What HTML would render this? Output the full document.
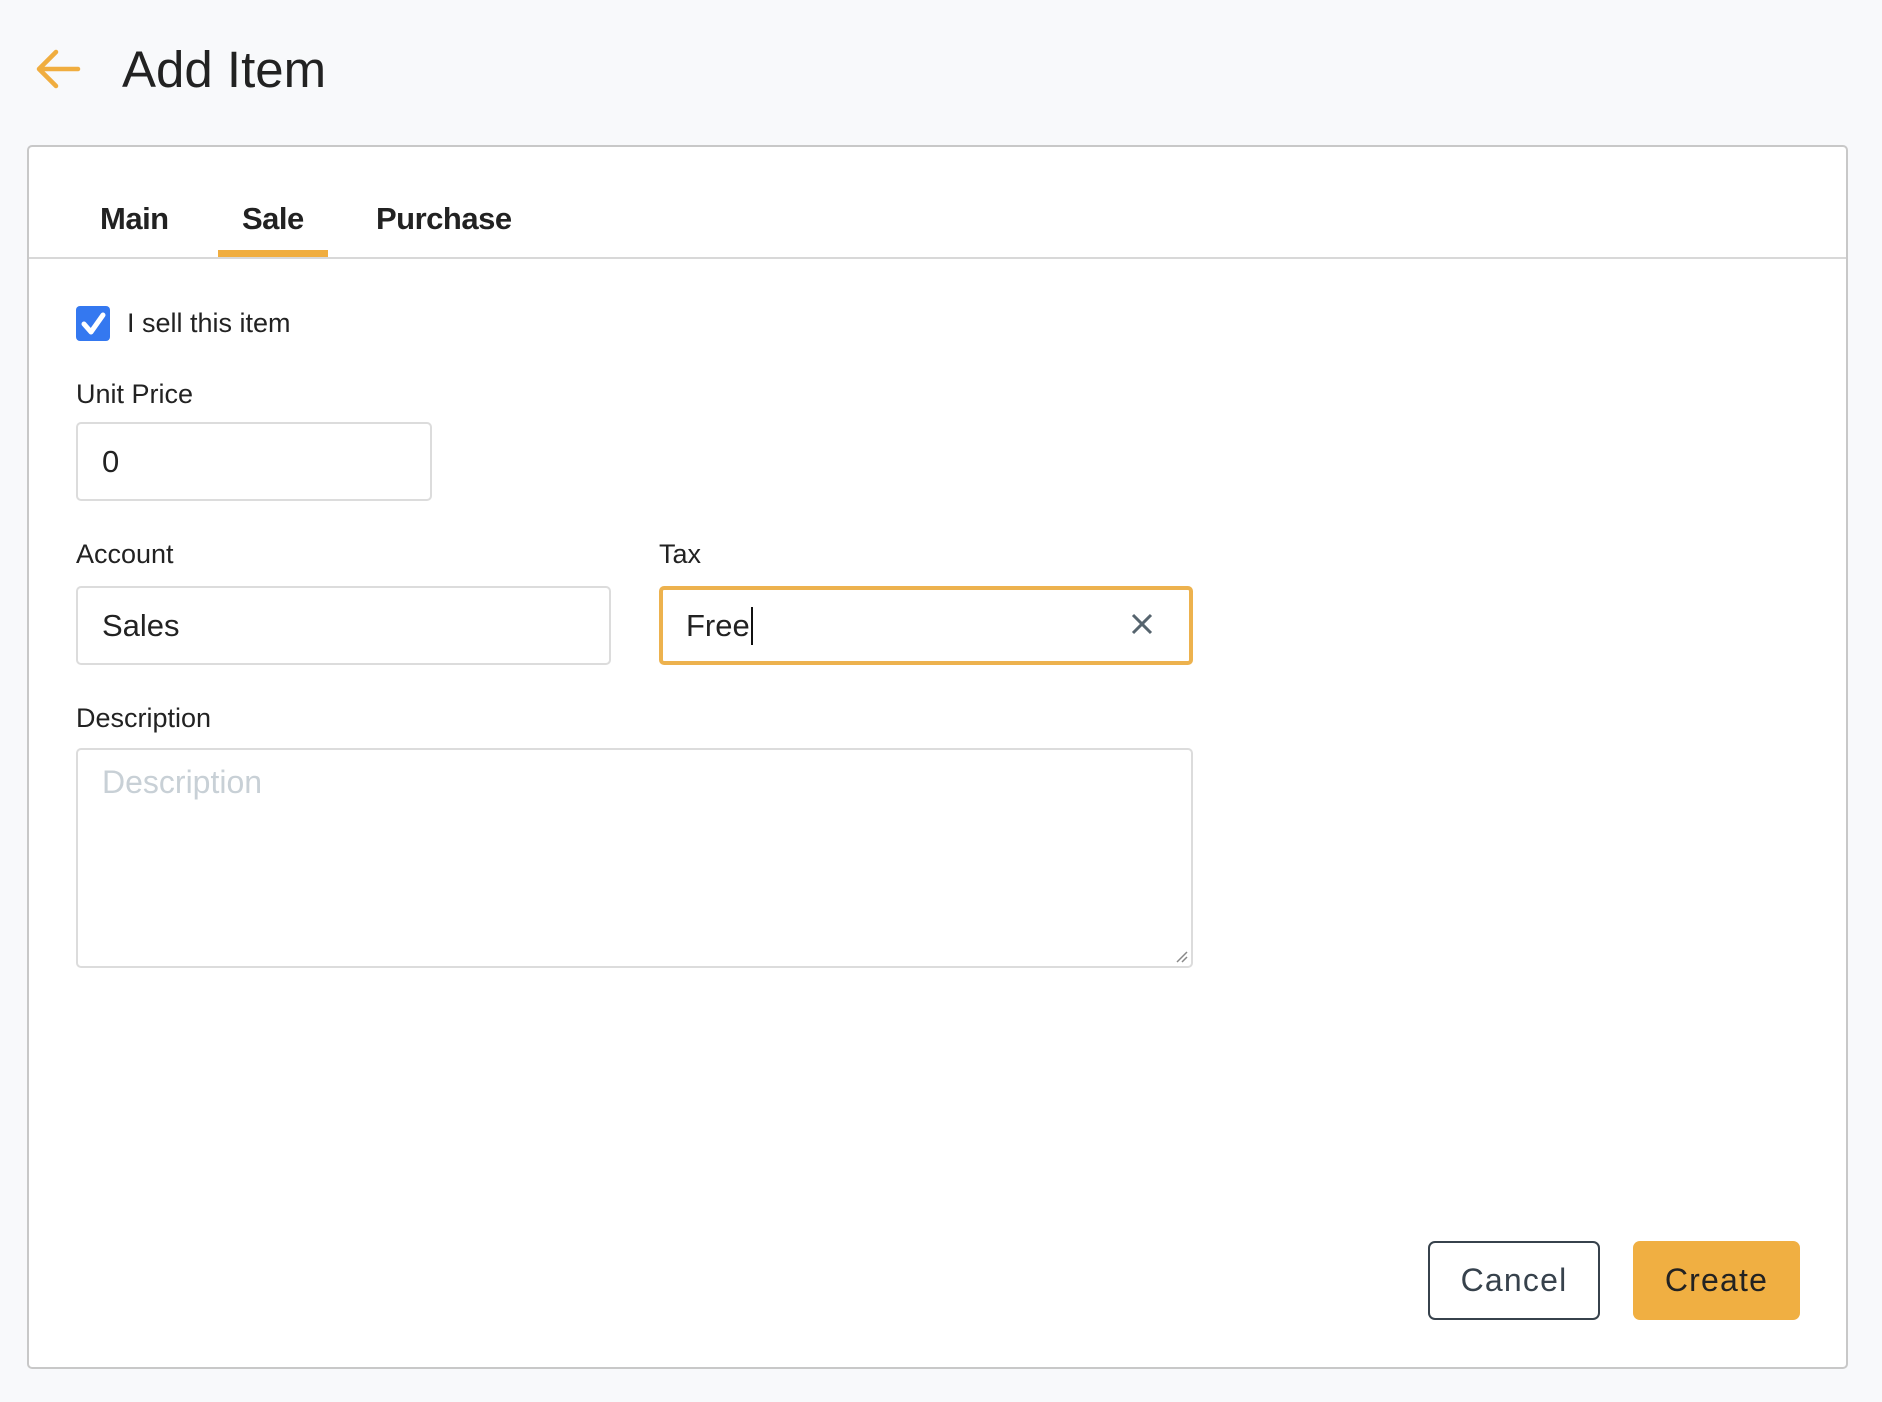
<!DOCTYPE html>
<html><head><style>
*{box-sizing:border-box;margin:0;padding:0}
body{width:1882px;height:1402px;background:#f8f9fb;font-family:"Liberation Sans",sans-serif;color:#222;position:relative;overflow:hidden}
.a{position:absolute}
.card{left:27px;top:145px;width:1821px;height:1224px;background:#fff;border:2px solid #c8c8c8;border-radius:5px}
.tab{font-weight:bold;font-size:31px;top:201px;color:#222;letter-spacing:-0.5px}
.lbl{font-size:27px;color:#222}
.inp{border:2px solid #dcdcdc;border-radius:5px;background:#fff;font-size:31px;padding-left:24px;display:flex;align-items:center}
.btn{top:1241px;height:79px;border-radius:7px;font-size:32px;letter-spacing:1.2px;display:flex;align-items:center;justify-content:center}
</style></head><body>
<svg class="a" style="left:34px;top:46px" width="48" height="48" viewBox="0 0 48 48"><path d="M44 23H6M22 6L5 23l17 17" fill="none" stroke="#f0ad3f" stroke-width="4.5" stroke-linecap="round" stroke-linejoin="round"/></svg>
<div class="a" style="left:122px;top:40px;font-size:51px;color:#222">Add Item</div>
<div class="a card"></div>
<div class="a tab" style="left:100px">Main</div>
<div class="a tab" style="left:242px">Sale</div>
<div class="a tab" style="left:376px">Purchase</div>
<div class="a" style="left:29px;top:257px;width:1817px;height:2px;background:#d8d8d8"></div>
<div class="a" style="left:218px;top:250px;width:110px;height:7px;background:#f0ad3f"></div>
<div class="a" style="left:76px;top:306px;width:34px;height:35px;background:#3478f0;border-radius:4px"></div>
<svg class="a" style="left:76px;top:306px" width="34" height="35" viewBox="0 0 34 35"><path d="M8 18l7 8 12-17" fill="none" stroke="#fff" stroke-width="5" stroke-linecap="round" stroke-linejoin="round"/></svg>
<div class="a lbl" style="left:127px;top:308px">I sell this item</div>
<div class="a lbl" style="left:76px;top:379px">Unit Price</div>
<div class="a inp" style="left:76px;top:422px;width:356px;height:79px">0</div>
<div class="a lbl" style="left:76px;top:539px">Account</div>
<div class="a inp" style="left:76px;top:586px;width:535px;height:79px">Sales</div>
<div class="a lbl" style="left:659px;top:539px">Tax</div>
<div class="a inp" style="left:659px;top:586px;width:534px;height:79px;border:4px solid #edb24e;padding-left:23px">Free<span style="display:inline-block;width:2px;height:38px;background:#111;margin-left:1px"></span></div>
<svg class="a" style="left:1129px;top:611px" width="26" height="26" viewBox="0 0 26 26"><path d="M4 4l18 18M22 4L4 22" stroke="#56646e" stroke-width="3"/></svg>
<div class="a lbl" style="left:76px;top:703px">Description</div>
<div class="a" style="left:76px;top:748px;width:1117px;height:220px;border:2px solid #dcdcdc;border-radius:5px"></div>
<div class="a" style="left:102px;top:764px;font-size:32px;color:#c8d0d6">Description</div>
<svg class="a" style="left:1173px;top:948px" width="16" height="16"><path d="M4 14L14 4M9 14L14 9" stroke="#888" stroke-width="1.5"/></svg>
<div class="a btn" style="left:1428px;width:172px;border:2px solid #37424c;color:#37424c;background:#fff">Cancel</div>
<div class="a btn" style="left:1633px;width:167px;background:#f0af42;color:#222">Create</div>
</body></html>
